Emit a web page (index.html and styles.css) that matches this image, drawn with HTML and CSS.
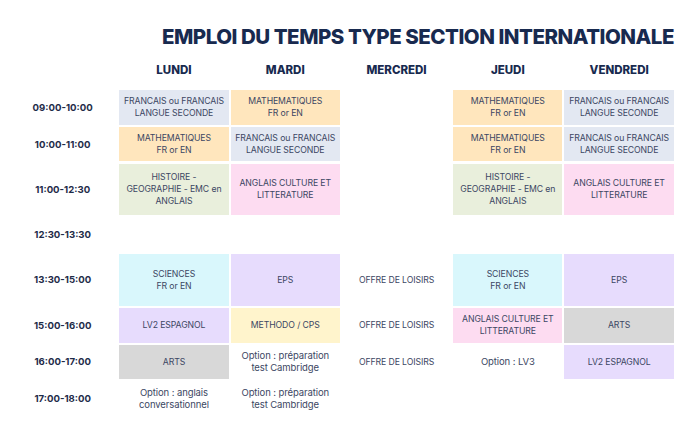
FILE: index.html
```html
<!DOCTYPE html>
<html lang="fr">
<head>
<meta charset="utf-8">
<title>Emploi du temps</title>
<link rel="stylesheet" href="styles.css">
</head>
<body>
<div class="page">
  <h1 class="title">EMPLOI DU TEMPS TYPE SECTION INTERNATIONALE</h1>
  <div class="grid">
    <div class="head"></div>
    <div class="head">LUNDI</div>
    <div class="head">MARDI</div>
    <div class="head">MERCREDI</div>
    <div class="head">JEUDI</div>
    <div class="head">VENDREDI</div>

    <div class="time">09:00-10:00</div>
    <div class="cell c-blue">FRANCAIS ou FRANCAIS<br>LANGUE SECONDE</div>
    <div class="cell c-orange">MATHEMATIQUES<br>FR or EN</div>
    <div class="cell"></div>
    <div class="cell c-orange">MATHEMATIQUES<br>FR or EN</div>
    <div class="cell c-blue">FRANCAIS ou FRANCAIS<br>LANGUE SECONDE</div>

    <div class="time">10:00-11:00</div>
    <div class="cell c-orange">MATHEMATIQUES<br>FR or EN</div>
    <div class="cell c-blue">FRANCAIS ou FRANCAIS<br>LANGUE SECONDE</div>
    <div class="cell"></div>
    <div class="cell c-orange">MATHEMATIQUES<br>FR or EN</div>
    <div class="cell c-blue">FRANCAIS ou FRANCAIS<br>LANGUE SECONDE</div>

    <div class="time">11:00-12:30</div>
    <div class="cell c-green">HISTOIRE -<br>GEOGRAPHIE - EMC en<br>ANGLAIS</div>
    <div class="cell c-pink">ANGLAIS CULTURE ET<br>LITTERATURE</div>
    <div class="cell"></div>
    <div class="cell c-green">HISTOIRE -<br>GEOGRAPHIE - EMC en<br>ANGLAIS</div>
    <div class="cell c-pink">ANGLAIS CULTURE ET<br>LITTERATURE</div>

    <div class="time">12:30-13:30</div>
    <div class="cell"></div>
    <div class="cell"></div>
    <div class="cell"></div>
    <div class="cell"></div>
    <div class="cell"></div>

    <div class="time">13:30-15:00</div>
    <div class="cell c-cyan">SCIENCES<br>FR or EN</div>
    <div class="cell c-purple">EPS</div>
    <div class="cell">OFFRE DE LOISIRS</div>
    <div class="cell c-cyan">SCIENCES<br>FR or EN</div>
    <div class="cell c-purple">EPS</div>

    <div class="time">15:00-16:00</div>
    <div class="cell c-purple">LV2 ESPAGNOL</div>
    <div class="cell c-yellow">METHODO / CPS</div>
    <div class="cell">OFFRE DE LOISIRS</div>
    <div class="cell c-pink">ANGLAIS CULTURE ET<br>LITTERATURE</div>
    <div class="cell c-grey">ARTS</div>

    <div class="time">16:00-17:00</div>
    <div class="cell c-grey">ARTS</div>
    <div class="cell opt">Option : préparation<br>test Cambridge</div>
    <div class="cell">OFFRE DE LOISIRS</div>
    <div class="cell opt">Option : LV3</div>
    <div class="cell c-purple">LV2 ESPAGNOL</div>

    <div class="time">17:00-18:00</div>
    <div class="cell opt">Option : anglais<br>conversationnel</div>
    <div class="cell opt">Option : préparation<br>test Cambridge</div>
    <div class="cell"></div>
    <div class="cell"></div>
    <div class="cell"></div>
  </div>
</div>
</body>
</html>
```

FILE: styles.css
```css
html, body {
  margin: 0;
  padding: 0;
  background: #ffffff;
}

.page {
  width: 666px;
  padding: 24px 0 0 8px;
  font-family: "Inter", "Noto Sans", sans-serif;
}

.title {
  margin: 0;
  text-align: right;
  font-size: 20.5px;
  line-height: 26px;
  font-weight: 800;
  color: #182a4f;
  letter-spacing: -0.48px;
}

.grid {
  display: grid;
  grid-template-columns: repeat(6, 109.3px);
  grid-template-rows: 36px 34.5px 34.5px 51.7px 34.5px 51.7px 34.5px 34.5px 34.5px;
  column-gap: 2px;
  row-gap: 2.2px;
  margin-top: 2px;
}

.head {
  display: flex;
  align-items: center;
  justify-content: center;
  font-size: 11.5px;
  font-weight: 800;
  color: #182a4f;
}

.time {
  display: flex;
  align-items: center;
  justify-content: center;
  font-size: 9.6px;
  font-weight: 700;
  color: #1e2b48;
}

.cell {
  display: flex;
  align-items: center;
  justify-content: center;
  text-align: center;
  font-size: 8.7px;
  line-height: 12px;
  color: #3c4763;
  letter-spacing: -0.1px;
}

.opt {
  font-size: 9.5px;
}

.c-blue { background: #e3e8f2; }
.c-orange { background: #ffe6bd; }
.c-green { background: #e9efdc; }
.c-pink { background: #fddcf1; }
.c-cyan { background: #d9f7fc; }
.c-purple { background: #e7dcfd; }
.c-yellow { background: #fff4cc; }
.c-grey { background: #d8d8d8; }
```
